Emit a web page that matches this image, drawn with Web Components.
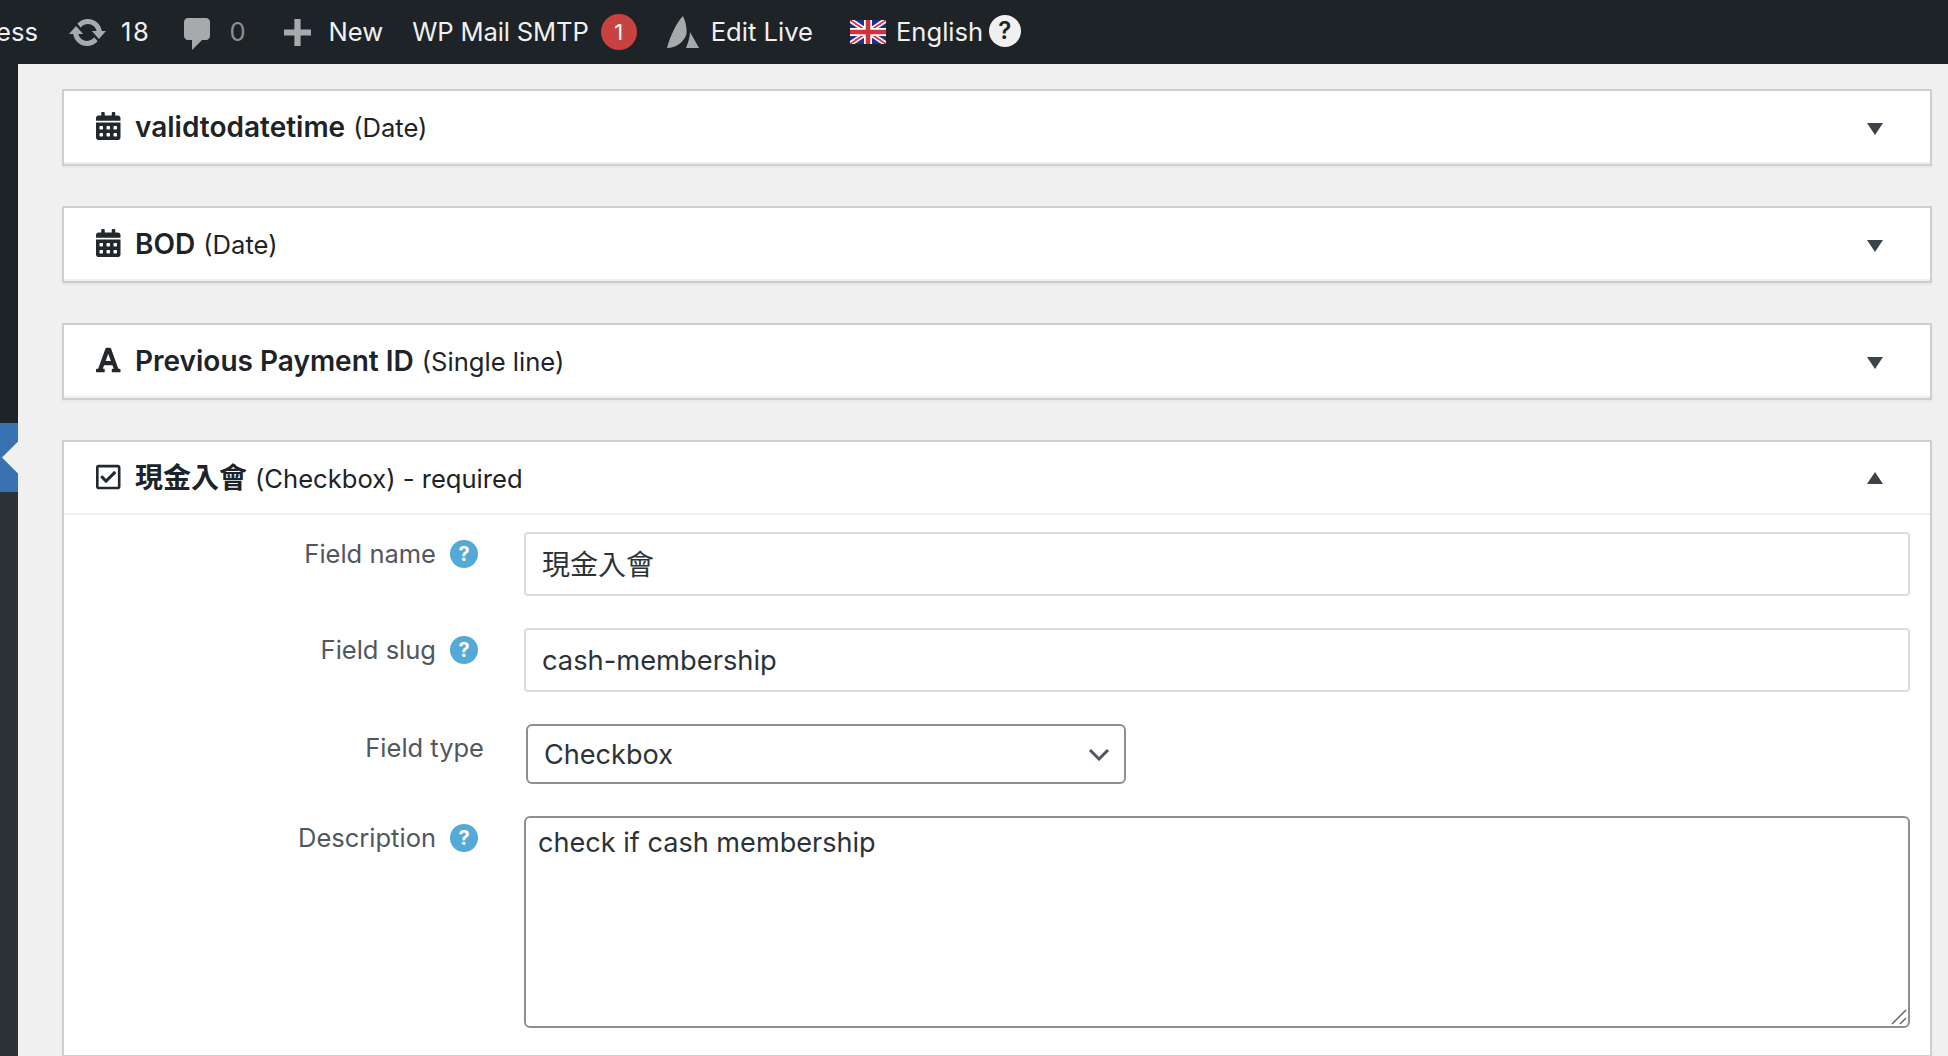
<!DOCTYPE html>
<html lang="en"><head><meta charset="utf-8"><title>Fields</title>
<style>
html,body{margin:0;height:1056px;overflow:hidden;background:#f0f0f0;font-family:Inter,"Noto Sans CJK TC",sans-serif}
.layout{display:flex;height:992px;overflow:hidden}
</style></head><body>
<wp-adminbar></wp-adminbar>
<div class="layout">
  <wp-sidebar></wp-sidebar>
  <wp-main>
    <field-card icon="calendar" name="validtodatetime" type="(Date)"></field-card>
    <field-card icon="calendar" name="BOD" type="(Date)"></field-card>
    <field-card icon="font" name="Previous Payment ID" type="(Single line)"></field-card>
    <field-card icon="check" name="現金入會" type="(Checkbox) - required" open>
      <form-row label="Field name" help><text-box style="font-size:28px">現金入會</text-box></form-row>
      <form-row label="Field slug" help><text-box>cash-membership</text-box></form-row>
      <form-row label="Field type"><select-box>Checkbox</select-box></form-row>
      <form-row label="Description" help><area-box>check if cash membership</area-box></form-row>
    </field-card>
  </wp-main>
</div>
<script>
function def(name, css, html, init){
  customElements.define(name, class extends HTMLElement{
    connectedCallback(){
      if(this.shadowRoot) return;
      const r=this.attachShadow({mode:'open'});
      r.innerHTML='<style>'+css+'</style>'+(typeof html==='function'?html(this):html);
    }
  });
}
def('wp-adminbar',`
:host{display:flex;align-items:center;height:64px;background:#1d2327;color:#f0f0f1;font:400 25.6px/66px Inter,sans-serif;white-space:nowrap;overflow:hidden}
svg{display:block;flex:none}
span{display:block}
.dim{color:#8c8f94}
.badge{width:36px;height:36px;border-radius:50%;background:#c8433f;color:#fff;font-size:22px;line-height:36px;text-align:center;margin:0 30px 0 12px}
.q{width:32px;height:32px;border-radius:50%;background:#f0f0f1;color:#1d2327;font-size:24px;font-weight:600;line-height:32px;text-align:center;margin-left:5.5px;margin-top:-3px}
.flag{filter:blur(.6px)}
`,`
<span style="margin-left:-4px;width:44px;margin-right:28.5px">ess</span>
<svg width="37" height="27" viewBox=".8 3.28 18.4 13.44" fill="#a7aaad"><path d="M10.2 3.28c3.53 0 6.43 2.61 6.92 6h2.08l-3.5 4-3.5-4h2.32c-.45-1.97-2.21-3.45-4.32-3.45-1.45 0-2.73.71-3.54 1.78L4.95 5.66C6.23 4.2 8.11 3.28 10.2 3.28zm-.4 13.44c-3.52 0-6.43-2.61-6.92-6H.8l3.5-4c1.17 1.33 2.33 2.67 3.5 4H5.48c.45 1.97 2.21 3.45 4.32 3.45 1.45 0 2.73-.71 3.54-1.78l1.71 1.95c-1.28 1.46-3.15 2.38-5.25 2.38z"/></svg>
<span style="margin-left:15.5px;width:29px;margin-right:32.5px;letter-spacing:1.5px">18</span>
<svg width="28" height="32" viewBox="3 2 13 16" fill="#a7aaad" style="margin-top:4px"><path d="M5 2h9c1.1 0 2 .9 2 2v7c0 1.1-.9 2-2 2h-2l-5 5v-5H5c-1.1 0-2-.9-2-2V4c0-1.1.9-2 2-2z"/></svg>
<span class="dim" style="margin-left:19px;width:16px;margin-right:38px">0</span>
<svg width="27" height="27" viewBox="4 2 13 13" fill="#a7aaad"><path d="M17 7v3h-5v5H9v-5H4V7h5V2h3v5h5z"/></svg>
<span style="margin-left:18px">New</span>
<span style="margin-left:29px;letter-spacing:-.15px">WP Mail SMTP</span>
<span class="badge">1</span>
<svg width="32" height="32" viewBox="0 0 32 32" fill="#a7aaad"><path d="M0 32C3 20 10 6 16 0c3 6 4 13 3.500 18C17 26 9 32 0 32zM23 16l9 16H19c2-5 4-11 4-16z"/></svg>
<span style="margin-left:12px">Edit Live</span>
<svg class="flag" width="36" height="24" viewBox="0 0 36 24" style="margin-left:37px"><rect width="36" height="24" fill="#1c2f8f"/><path d="M0 0L36 24M36 0L0 24" stroke="#fff" stroke-width="5"/><path d="M0 0L36 24M36 0L0 24" stroke="#d5303c" stroke-width="1.800"/><path d="M18 0V24M0 12H36" stroke="#fff" stroke-width="8"/><path d="M18 0V24M0 12H36" stroke="#d5303c" stroke-width="4.500"/></svg>
<span style="margin-left:10px">English</span>
<span class="q">?</span>
`);
def('wp-sidebar',`
:host{display:flex;flex-direction:column;width:18px;flex:none;background:#2c3338}
.top{height:359px;background:#1d2327}
.blue{height:69px;background:#3872b0;display:flex;align-items:center;justify-content:flex-end}
.arrow{width:16px;height:32px;background:#f0f0f0;clip-path:polygon(0 50%,100% 0,100% 100%)}
`,`<div class="top"></div><div class="blue"><div class="arrow"></div></div>`);
def('wp-main',`
:host{display:flex;flex-direction:column;gap:40px;flex:1;min-width:0;padding:25px 16px 0 44px;overflow:hidden}
`,`<slot></slot>`);
const ICONS={
 calendar:'<svg viewBox="0 0 448 512" width="24.500" height="28"><path d="M0 464c0 26.500 21.500 48 48 48h352c26.500 0 48-21.500 48-48V192H0v272zm320-196c0-6.600 5.400-12 12-12h40c6.600 0 12 5.400 12 12v40c0 6.600-5.400 12-12 12h-40c-6.600 0-12-5.400-12-12v-40zm0 128c0-6.600 5.400-12 12-12h40c6.600 0 12 5.400 12 12v40c0 6.600-5.400 12-12 12h-40c-6.600 0-12-5.400-12-12v-40zM192 268c0-6.600 5.400-12 12-12h40c6.600 0 12 5.400 12 12v40c0 6.600-5.400 12-12 12h-40c-6.600 0-12-5.400-12-12v-40zm0 128c0-6.600 5.400-12 12-12h40c6.600 0 12 5.400 12 12v40c0 6.600-5.400 12-12 12h-40c-6.600 0-12-5.400-12-12v-40zM64 268c0-6.600 5.400-12 12-12h40c6.600 0 12 5.400 12 12v40c0 6.600-5.400 12-12 12H76c-6.600 0-12-5.400-12-12v-40zm0 128c0-6.600 5.400-12 12-12h40c6.600 0 12 5.400 12 12v40c0 6.600-5.400 12-12 12H76c-6.600 0-12-5.400-12-12v-40zM400 64h-48V16c0-8.800-7.200-16-16-16h-32c-8.800 0-16 7.200-16 16v48H160V16c0-8.800-7.200-16-16-16h-32c-8.800 0-16 7.200-16 16v48H48C21.500 64 0 85.500 0 112v48h448v-48c0-26.500-21.500-48-48-48z"/></svg>',
 font:'<svg viewBox="0 0 448 512" width="24.500" height="28"><path d="M432 416h-23.410L277.880 53.690A32 32 0 0 0 247.580 32h-47.160a32 32 0 0 0-30.300 21.690L39.410 416H16a16 16 0 0 0-16 16v32a16 16 0 0 0 16 16h128a16 16 0 0 0 16-16v-32a16 16 0 0 0-16-16h-19.600l23.300-64h152.600l23.300 64H304a16 16 0 0 0-16 16v32a16 16 0 0 0 16 16h128a16 16 0 0 0 16-16v-32a16 16 0 0 0-16-16zM176.850 272L224 142.510 271.150 272z"/></svg>',
 check:'<svg viewBox="0 0 448 512" width="24.500" height="28"><path d="M400 32H48C21.490 32 0 53.490 0 80v352c0 26.510 21.490 48 48 48h352c26.510 0 48-21.490 48-48V80c0-26.510-21.490-48-48-48zm0 400H48V80h352v352zm-35.864-241.724L191.547 361.480c-4.705 4.667-12.303 4.637-16.970-.068l-90.781-91.516c-4.667-4.705-4.637-12.303.069-16.971l22.719-22.536c4.705-4.667 12.303-4.637 16.970.069l59.792 60.277 141.352-140.216c4.705-4.667 12.303-4.637 16.970.068l22.536 22.718c4.667 4.706 4.637 12.304-.068 16.971z"/></svg>'
};
def('field-card',`
:host{display:block;flex:none;background:#fff;border:2px solid #ccd0d4;box-shadow:0 2px 2px rgba(0,0,0,.04);color:#1d2327}
.head{display:flex;align-items:center;height:71px;border-bottom:2px solid #eee;padding:0 47px 0 32px;font:400 25.6px/1.2 Inter,"Noto Sans CJK TC",sans-serif}
svg{display:block;flex:none;fill:#23282d}
.ic{width:25px;margin:0 14px 2px 0}
.t{margin-top:3px;white-space:nowrap}
b{font-weight:600;font-size:28px;margin-right:8px}
.sp{flex:1}
.tri{width:0;height:0;border-left:8px solid transparent;border-right:8px solid transparent}
.down{border-top:12px solid #3c434a;margin-top:4px}
.up{border-bottom:12px solid #3c434a}
.body{display:flex;flex-direction:column;gap:32px;padding:17px 20px 27px 0}
`,h=>{
 const open=h.hasAttribute('open');
 return `<div class="head"><span class="ic">${ICONS[h.getAttribute('icon')]}</span><span class="t"><b>${h.getAttribute('name')}</b>${h.getAttribute('type')}</span><span class="sp"></span><span class="tri ${open?'up':'down'}"></span></div>`+(open?'<div class="body"><slot></slot></div>':'');
});
def('help-icon',`
:host{display:block;flex:none;width:28px;height:28px;border-radius:50%;background:#55a9d6;color:#fff;font:700 20px/28px Inter,sans-serif;text-align:center}
`,`?`);
def('form-row',`
:host{display:grid;grid-template-columns:420px 1fr;column-gap:40px}
.l{display:flex;justify-content:flex-end;align-items:center;height:44px;color:#50575e;font:400 25.5px/46px Inter,sans-serif}
:host(:not([help])) .l{padding-top:2px}
help-icon{margin:0 6px 0 14px}
`,h=>`<div class="l"><span>${h.getAttribute('label')}</span>${h.hasAttribute('help')?'<help-icon></help-icon>':''}</div><div><slot></slot></div>`);
def('text-box',`
:host{display:block;box-sizing:border-box;height:64px;border:2px solid #ddd;border-radius:4px;padding:0 16px;color:#2c3338;font:400 27.3px/62px Inter,"Noto Sans CJK TC",sans-serif;background:#fff}
`,`<slot></slot>`);
def('select-box',`
:host{display:flex;align-items:center;justify-content:space-between;box-sizing:border-box;width:600px;height:60px;margin-left:2px;border:2px solid #8c8f94;border-radius:6px;padding:0 14px 0 16px;color:#2c3338;font:400 27.1px/58px Inter,sans-serif;background:#fff}
svg{display:block}
span{margin-top:2px}
`,`<span><slot></slot></span><svg width="22" height="13" viewBox="0 0 22 13"><path d="M2 2l9 9 9-9" fill="none" stroke="#50575e" stroke-width="3"/></svg>`);
def('area-box',`
:host{display:block;position:relative;box-sizing:border-box;height:212px;border:2px solid #8c8f94;border-radius:6px;padding:3px 12px;color:#2c3338;font:400 27.1px/44px Inter,sans-serif;background:#fff}
svg{position:absolute;right:1px;bottom:1px}
`,`<slot></slot><svg width="16" height="16" viewBox="0 0 16 16"><path d="M1 15L15 1M9 15l6-6" stroke="#666" stroke-width="1.500" fill="none"/></svg>`);
</script>
</body></html>
